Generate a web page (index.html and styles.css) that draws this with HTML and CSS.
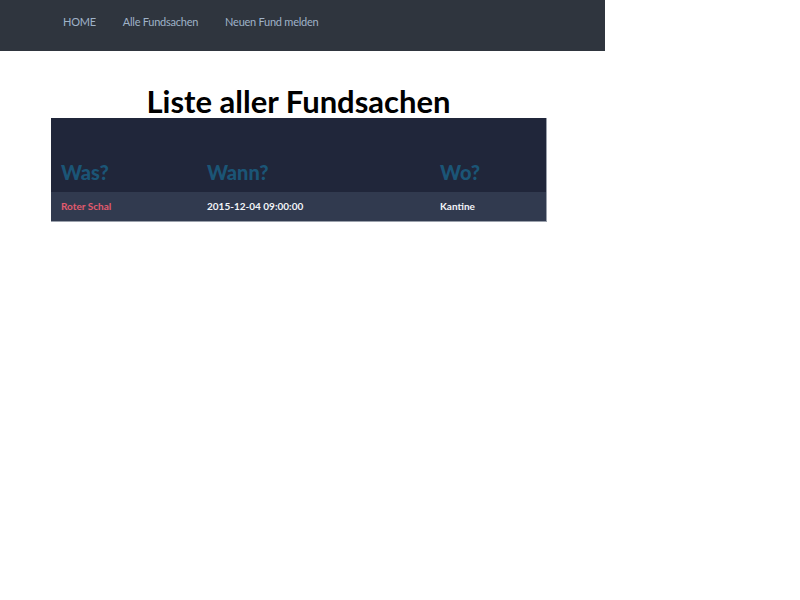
FILE: index.html
```html
<!DOCTYPE html>
<html lang="de">
<head>
<meta charset="utf-8">
<title>Fundsachen</title>
<link rel="stylesheet" href="styles.css">
</head>
<body>
<div class="page">
  <nav class="nav">
    <a class="nav-link" href="#">HOME</a>
    <a class="nav-link" href="#">Alle Fundsachen</a>
    <a class="nav-link" href="#">Neuen Fund melden</a>
  </nav>
  <main class="main">
    <h1 class="title">Liste aller Fundsachen</h1>
    <table class="list">
      <colgroup>
        <col class="c-was">
        <col class="c-wann">
        <col class="c-wo">
      </colgroup>
      <thead>
        <tr>
          <th>Was?</th>
          <th>Wann?</th>
          <th>Wo?</th>
        </tr>
      </thead>
      <tbody>
        <tr>
          <td class="item">Roter Schal</td>
          <td>2015-12-04 09:00:00</td>
          <td>Kantine</td>
        </tr>
      </tbody>
    </table>
  </main>
</div>
</body>
</html>
```

FILE: styles.css
```css
html, body {
  margin: 0;
  padding: 0;
  background: #ffffff;
}
body {
  font-family: "Lato", "Noto Sans", sans-serif;
}
.page {
  width: 605px;
}
.nav {
  height: 51px;
  background: #2f353e;
  display: flex;
  align-items: center;
  padding-left: 63px;
  box-sizing: border-box;
  gap: 27px;
}
.nav-link {
  color: #9fb2c8;
  text-decoration: none;
  font-size: 11px;
  letter-spacing: -0.25px;
  padding-bottom: 8px;
}
.main {
  padding: 34px 0 0 51px;
}
.title {
  width: 495px;
  margin: 0;
  text-align: center;
  font-size: 31px;
  font-weight: 700;
  line-height: 33px;
  color: #000;
}
.list {
  width: 495px;
  table-layout: fixed;
  border-collapse: collapse;
  border-right: 1px solid #9aa0ab;
  border-bottom: 1px solid #9aa0ab;
}
.c-was { width: 146px; }
.c-wann { width: 233px; }
.c-wo { width: 116px; }
.list thead tr {
  background: #20263a;
}
.list th {
  height: 74px;
  box-sizing: border-box;
  vertical-align: bottom;
  text-align: left;
  color: #1b5576;
  font-size: 20px;
  font-weight: 900;
  padding: 0 0 8px 10px;
}
.list tbody tr {
  background: #313a4f;
}
.list td {
  height: 29px;
  box-sizing: border-box;
  padding: 0 0 1px 10px;
  color: #f2f4f8;
  font-size: 10px;
  font-weight: 700;
  vertical-align: middle;
  white-space: nowrap;
}
.list td.item {
  color: #e25a6e;
}
```
